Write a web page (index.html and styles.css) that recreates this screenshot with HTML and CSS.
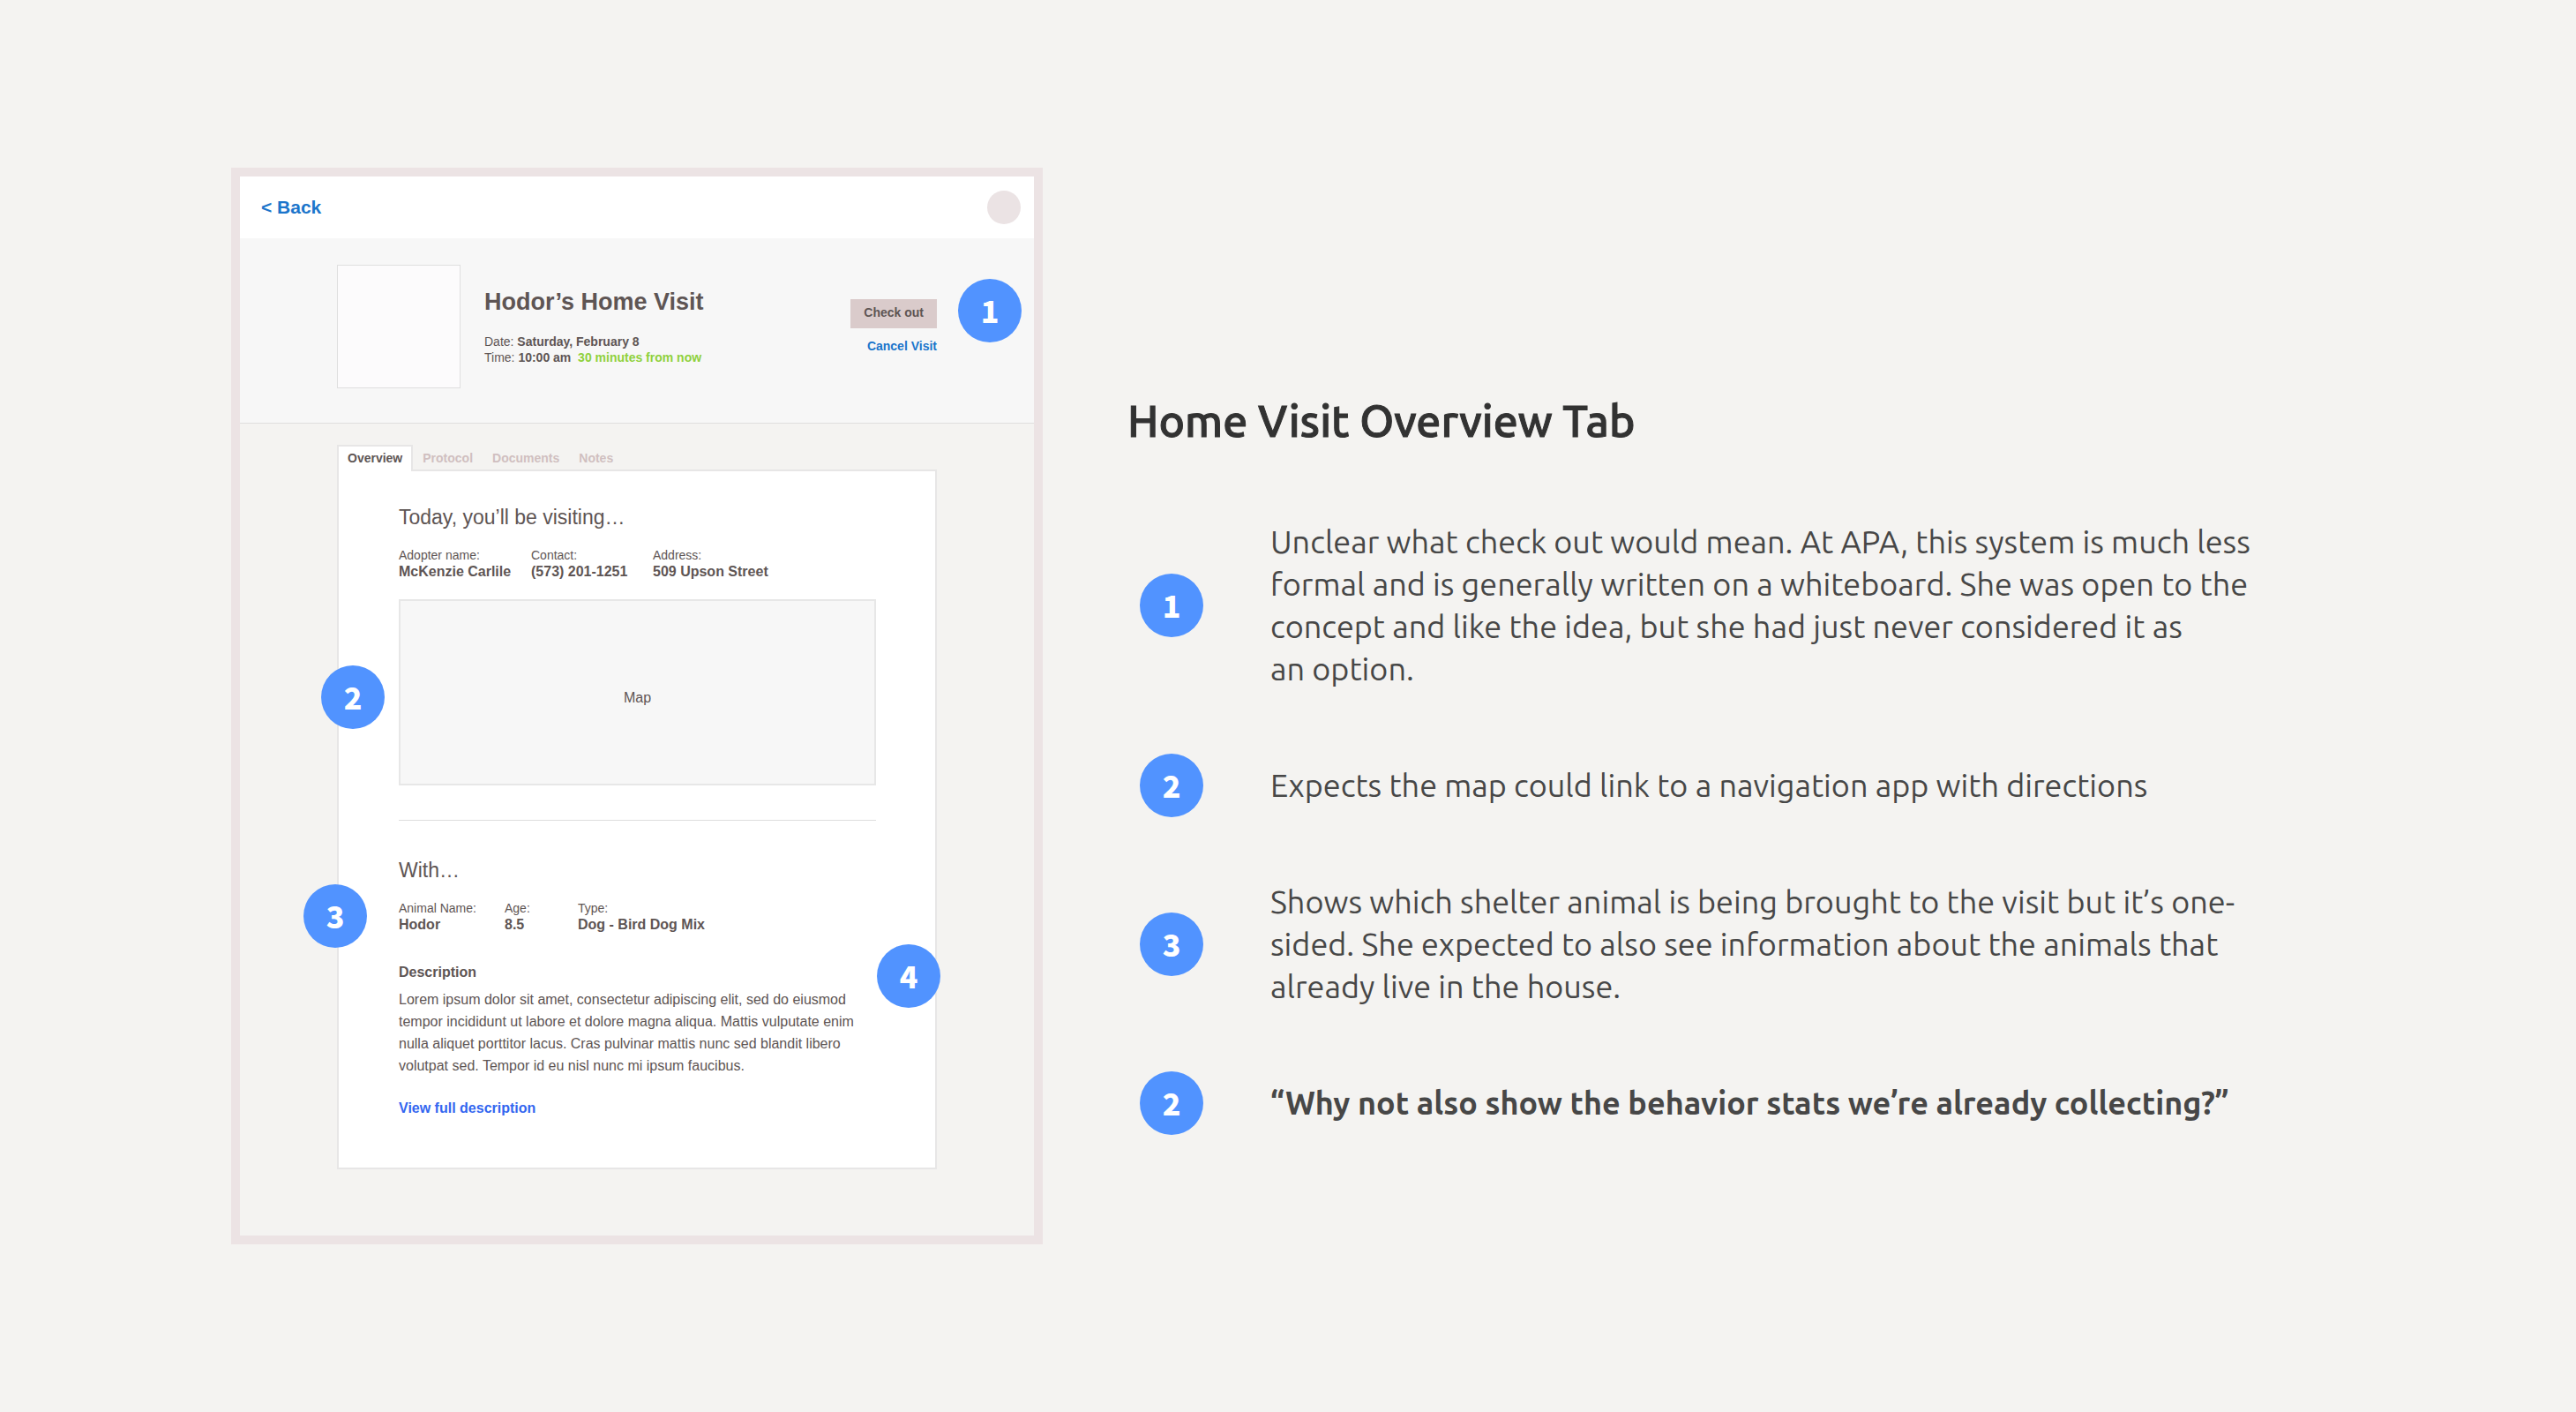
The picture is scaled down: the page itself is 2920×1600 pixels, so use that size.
FILE: index.html
```
<!DOCTYPE html>
<html lang="en">
<head>
<meta charset="utf-8">
<meta name="viewport" content="width=device-width, initial-scale=1">
<title>Home Visit Overview Tab</title>
<link rel="stylesheet" href="styles.css">
</head>
<body>
<main class="slide">
  <section class="wireframe" aria-label="Home visit wireframe">
    <nav class="topbar">
      <a class="back" href="#">&lt; Back</a>
      <span class="avatar"></span>
    </nav>
    <header class="visit">
      <div class="photo"></div>
      <div class="visit-info">
        <h2 class="visit-title">Hodor’s Home Visit</h2>
        <p class="visit-line">Date: <strong>Saturday, February 8</strong></p>
        <p class="visit-line">Time: <strong>10:00 am</strong>&nbsp; <strong class="soon">30 minutes from now</strong></p>
      </div>
      <div class="visit-actions">
        <button class="checkout" type="button">Check out</button>
        <a class="cancel" href="#">Cancel Visit</a>
      </div>
      <span class="badge badge-checkout">1</span>
    </header>
    <div class="content">
      <div class="tabs" role="tablist">
        <button class="tab tab-active" type="button" role="tab" aria-selected="true">Overview</button>
        <button class="tab" type="button" role="tab" aria-selected="false">Protocol</button>
        <button class="tab" type="button" role="tab" aria-selected="false">Documents</button>
        <button class="tab" type="button" role="tab" aria-selected="false">Notes</button>
      </div>
      <div class="card" role="tabpanel">
        <section class="adopter">
          <h3 class="card-title">Today, you’ll be visiting…</h3>
          <dl class="details details-adopter">
            <div><dt>Adopter name:</dt><dd>McKenzie Carlile</dd></div>
            <div><dt>Contact:</dt><dd>(573) 201-1251</dd></div>
            <div><dt>Address:</dt><dd>509 Upson Street</dd></div>
          </dl>
          <div class="map">Map<span class="badge badge-map">2</span></div>
        </section>
        <section class="animal">
          <h3 class="card-title">With…</h3>
          <dl class="details details-animal">
            <div><dt>Animal Name:</dt><dd>Hodor</dd></div>
            <div><dt>Age:</dt><dd>8.5</dd></div>
            <div><dt>Type:</dt><dd>Dog - Bird Dog Mix</dd></div>
          </dl>
          <h4 class="description-title">Description</h4>
          <p class="description">Lorem ipsum dolor sit amet, consectetur adipiscing elit, sed do eiusmod tempor incididunt ut labore et dolore magna aliqua. Mattis vulputate enim nulla aliquet porttitor lacus. Cras pulvinar mattis nunc sed blandit libero volutpat sed. Tempor id eu nisl nunc mi ipsum faucibus.</p>
          <a class="full-link" href="#">View full description</a>
          <span class="badge badge-animal">3</span>
          <span class="badge badge-stats">4</span>
        </section>
      </div>
    </div>
  </section>
  <section class="notes">
    <h1 class="notes-title">Home Visit Overview Tab</h1>
    <ul class="note-list">
      <li class="note"><span class="badge">1</span><p>Unclear what check out would mean. At APA, this system is much less formal and is generally written on a whiteboard. She was open to the concept and like the idea, but she had just never considered it as an&nbsp;option.</p></li>
      <li class="note"><span class="badge">2</span><p>Expects the map could link to a navigation app with directions</p></li>
      <li class="note"><span class="badge">3</span><p>Shows which shelter animal is being brought to the visit but it’s one-sided. She expected to also see information about the animals that already live in the house.</p></li>
      <li class="note note-quote"><span class="badge">2</span><p>“Why not also show the behavior stats we’re already collecting?”</p></li>
    </ul>
  </section>
</main>
</body>
</html>
```

FILE: styles.css
```
*, *::before, *::after { box-sizing: border-box; }

body {
  margin: 0;
  background: #f4f3f1;
  color: #5e5554;
  font-family: "Liberation Sans", Arial, sans-serif;
}

h1, h2, h3, h4, p, ul, dl, dd { margin: 0; padding: 0; }
ul { list-style: none; }
a { text-decoration: none; }
button { border: 0; font: inherit; cursor: pointer; }

.slide {
  display: grid;
  grid-template-columns: minmax(0, 920px) minmax(0, 1304px);
  column-gap: 96px;
  align-items: start;
  padding: 190px 262px;
}

/* Wireframe */
.wireframe { border: 10px solid #ece3e4; }

.topbar {
  display: flex;
  align-items: center;
  justify-content: space-between;
  height: 70px;
  padding: 0 15px 0 24px;
  background: #fff;
}
.back { color: #1b75cb; font-size: 21px; font-weight: 700; line-height: 24px; }
.avatar { width: 38px; height: 38px; border-radius: 50%; background: #ebe3e4; }

.visit {
  position: relative;
  display: flex;
  align-items: center;
  gap: 27px;
  padding: 30px 110px 39px;
  border-bottom: 1px solid #dedede;
  background: #f7f7f7;
}
.photo { width: 140px; height: 140px; border: 1px solid #dfdfdf; background: #fcfbfc; }
.visit-info { flex: 1; }
.visit-title { margin-bottom: 20px; font-size: 27px; line-height: 32px; }
.visit-line { font-size: 14px; line-height: 18px; }
.soon { color: #8fd13c; }
.visit-actions {
  display: flex;
  flex-direction: column;
  align-items: flex-end;
  gap: 11px;
  font-size: 14px;
  font-weight: 700;
  line-height: 18px;
}
.checkout { height: 33px; padding: 0 15px 3px; background: #dacbcb; color: #5e5554; }
.cancel { color: #1b75cb; }

.content { padding: 24px 110px 75px; }
.tabs { display: flex; }
.tab {
  padding: 0 9px;
  border: solid transparent;
  border-width: 2px 2px 0;
  background: none;
  color: #d0bfc0;
  font-size: 14px;
  font-weight: 700;
  line-height: 26px;
}
.tab-active {
  position: relative;
  margin-bottom: -2px;
  padding: 0 10px 2px;
  border-color: #e7e6e6;
  background: #fff;
  color: #5e5554;
}
.card { padding: 38px 67px 57px 68px; border: 2px solid #e7e6e6; background: #fff; }
.card-title { font-size: 23px; font-weight: 400; line-height: 28px; }

.details { display: grid; margin-top: 20px; }
.details-adopter { grid-template-columns: 150px 138px auto; }
.details-animal { grid-template-columns: 120px 83px auto; }
.details dt { font-size: 14px; line-height: 18px; }
.details dd { font-size: 16px; font-weight: 700; line-height: 20px; }

.map {
  position: relative;
  display: grid;
  place-items: center;
  height: 211px;
  margin-top: 21px;
  padding-top: 12px;
  border: 2px solid #e7e7e7;
  background: #f7f7f7;
  font-size: 16px;
  line-height: 20px;
}

.adopter { padding-bottom: 39px; border-bottom: 1px solid #dedede; }
.animal { position: relative; margin-top: 42px; }
.description-title { margin-top: 34px; font-size: 16px; line-height: 20px; }
.description { margin-top: 8px; font-size: 16px; line-height: 25px; }
.full-link {
  display: inline-block;
  margin-top: 26px;
  color: #3366f0;
  font-size: 16px;
  font-weight: 700;
  line-height: 20px;
  vertical-align: top;
}

/* Numbered markers */
.badge {
  flex: none;
  width: 72px;
  height: 72px;
  border-radius: 50%;
  background: #5193ff;
  color: #fff;
  font-family: "Noto Sans CJK SC", sans-serif;
  font-size: 34px;
  font-weight: 900;
  line-height: 72px;
  text-align: center;
}
.badge-checkout { position: absolute; top: 46px; right: 14px; }
.badge-map { position: absolute; top: 73px; left: -90px; }
.badge-animal { position: absolute; top: 30px; left: -108px; }
.badge-stats { position: absolute; top: 98px; right: -73px; }

/* Notes */
.notes { padding-top: 256px; font-family: Ubuntu, "Noto Sans", sans-serif; }
.notes-title {
  color: #323232;
  font-size: 50px;
  font-weight: 500;
  line-height: 60px;
  -webkit-text-stroke: 1px #323232;
}
.note-list { display: grid; gap: 72px; margin-top: 84px; padding-left: 14px; }
.note {
  display: flex;
  align-items: center;
  gap: 76px;
  color: #474747;
  font-size: 36px;
  line-height: 48px;
}
.note-quote { font-weight: 700; }
```
